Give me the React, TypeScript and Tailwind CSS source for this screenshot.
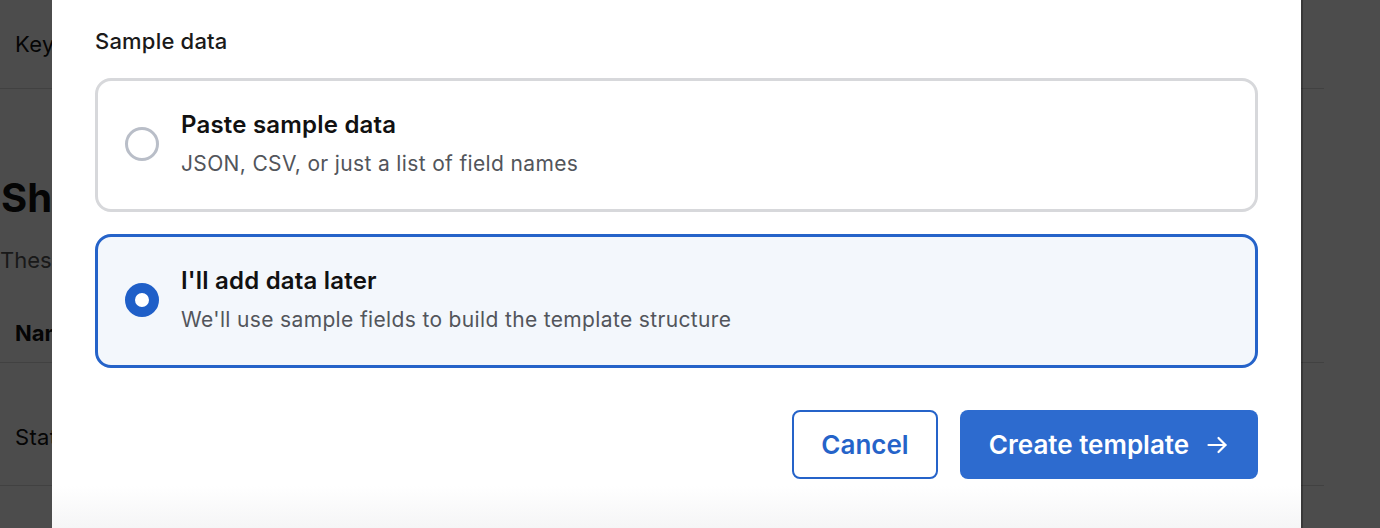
import React from "react";

const font = { fontFamily: "Inter, 'Noto Sans', sans-serif" };

function Radio({ checked }: { checked: boolean }) {
  return checked ? (
    <span className="box-border flex h-[34px] w-[34px] shrink-0 items-center justify-center rounded-full border-[10px] border-[#1f5fc8] bg-white" />
  ) : (
    <span className="box-border h-[34px] w-[34px] shrink-0 rounded-full border-[3px] border-[#b9bec8] bg-white" />
  );
}

function Option({
  checked,
  title,
  desc,
}: {
  checked: boolean;
  title: string;
  desc: string;
}) {
  return (
    <div
      className={
        checked
          ? "flex h-[134px] items-center gap-[22px] rounded-[16px] border-[3px] border-[#2563c9] bg-[#f3f7fc] px-[27px] pb-[3px]"
          : "flex h-[134px] items-center gap-[22px] rounded-[16px] border-[3px] border-[#d7d8db] bg-white px-[27px] pb-[3px]"
      }
    >
      <Radio checked={checked} />
      <div className="flex flex-col gap-[11px]">
        <div className="text-[24px] font-semibold leading-[30px] tracking-[0.2px] text-[#111111]">{title}</div>
        <div className="text-[21px] leading-[26px] tracking-[0.35px] text-[#52555b]">{desc}</div>
      </div>
    </div>
  );
}

export default function App() {
  return (
    <div className="relative h-[528px] w-[1380px] overflow-hidden bg-white" style={font}>
      {/* background page */}
      <div className="flex w-[1324px] flex-col text-[#111]">
        <div className="flex h-[89px] items-center border-b border-[#d9d9d9] pl-[15px] text-[22px] tracking-[0.3px]">Key</div>
        <div className="pl-[1px] pt-[84px] text-[40px] font-bold leading-[50px]">Shared fields</div>
        <div className="pt-[22px] text-[22px] leading-[30px] text-[#555]">These fields are shared</div>
        <div className="flex h-[88px] items-center border-b border-[#d9d9d9] pl-[15px] pt-[29px] text-[22px] font-bold">Name</div>
        <div className="flex h-[123px] items-center border-b border-[#d9d9d9] pl-[15px] pt-[26px] text-[22px] tracking-[0.3px]">Status</div>
      </div>
      {/* overlay */}
      <div className="absolute inset-0 bg-black/70" />
      {/* modal */}
      <div className="absolute inset-y-0 left-[52px] flex w-[1249px] flex-col bg-white shadow-[1px_0_0_1px_rgba(0,0,0,0.25)]">
        <div className="flex flex-col px-[43px] pt-[27px]">
          <div className="text-[22px] font-medium leading-[28px] tracking-[0.2px] text-[#1a1a1a]">Sample data</div>
          <div className="mt-[23px] flex flex-col gap-[22px]">
            <Option checked={false} title="Paste sample data" desc="JSON, CSV, or just a list of field names" />
            <Option checked={true} title="I'll add data later" desc="We'll use sample fields to build the template structure" />
          </div>
          <div className="mt-[42px] flex justify-end gap-[22px]">
            <button className="flex h-[69px] w-[146px] items-center justify-center rounded-[8px] border-2 border-[#2563c9] bg-white text-[26px] font-semibold text-[#2563c9]">
              Cancel
            </button>
            <button className="flex h-[69px] w-[298px] items-center justify-center gap-[16px] rounded-[8px] bg-[#2d6bcf] text-[26px] font-semibold text-white">
              Create template
              <svg width="24" height="24" viewBox="0 0 24 24" fill="none" stroke="currentColor" strokeWidth="2.2" strokeLinecap="round" strokeLinejoin="round">
                <path d="M3.5 12h17" />
                <path d="M13.5 5l7 7-7 7" />
              </svg>
            </button>
          </div>
        </div>
        <div className="mt-auto h-[42px] bg-gradient-to-b from-white to-[#f5f5f6]" />
      </div>
    </div>
  );
}
